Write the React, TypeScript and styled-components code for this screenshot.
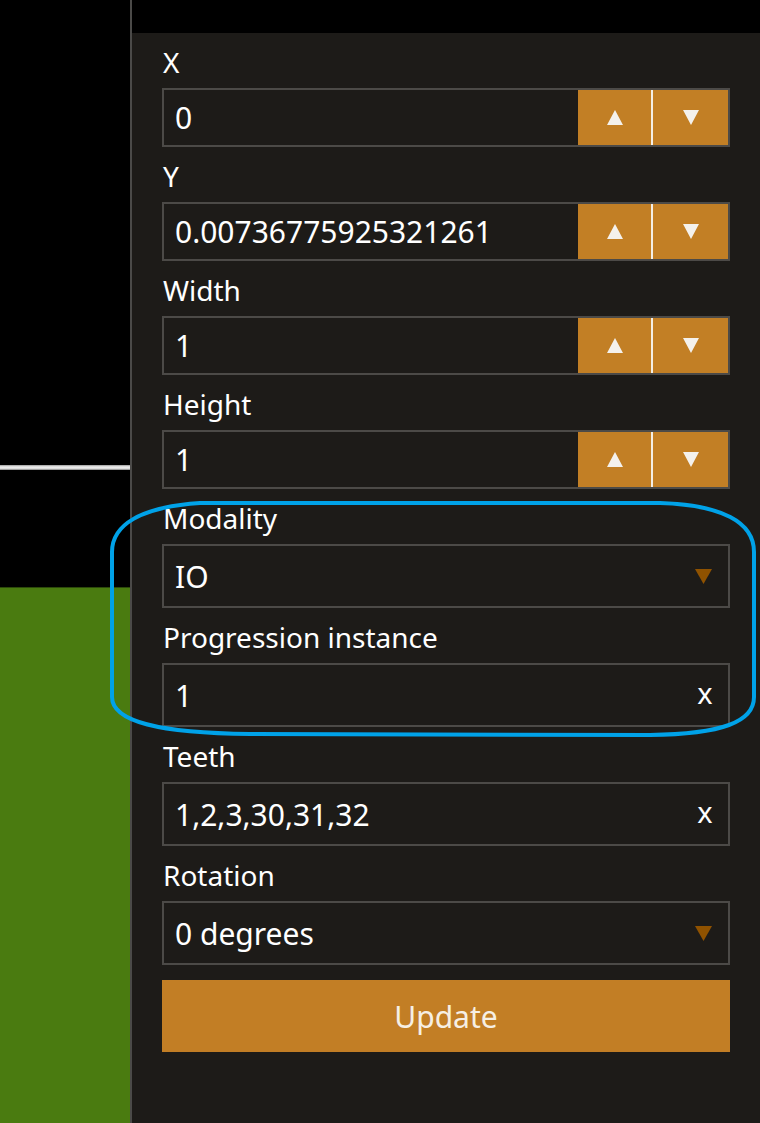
import styled, { createGlobalStyle } from "styled-components";

const GlobalStyle = createGlobalStyle`
    html, body {
        margin: 0;
        padding: 0;
        background: #1d1b18;
    }
    * {
        box-sizing: border-box;
    }
`;

const Page = styled.div`
    position: relative;
    display: flex;
    width: 760px;
    height: 1123px;
    overflow: hidden;
    font-family: "Noto Sans", "Open Sans", sans-serif;
    color: #ffffff;
`;

const Viewport = styled.div`
    display: flex;
    flex-direction: column;
    flex-shrink: 0;
    width: 130px;
    background: #000;
`;

const Blank = styled.div<{ $h: number }>`
    height: ${(p) => p.$h}px;
    background: #000;
`;

const Horizon = styled.div`
    height: 5px;
    background: linear-gradient(#9a9a9a, #f2f2f2 40%, #d6d6d6 80%, #6a6a6a);
`;

const Ground = styled.div`
    flex: 1;
    background: #4a7b10;
    border-top: 1px solid #2c4a0a;
`;

const Divider = styled.div`
    flex-shrink: 0;
    width: 2px;
    background: #4b4a48;
`;

const Side = styled.div`
    flex: 1;
    min-width: 0;
    display: flex;
    flex-direction: column;
`;

const TopBar = styled.div`
    height: 33px;
    background: #000;
`;

const Panel = styled.div`
    flex: 1;
    min-width: 0;
    background: #1d1b18;
    padding: 0 30px 0 30px;
`;

const Field = styled.div`
    margin-top: 12px;
`;

const Label = styled.div`
    font-size: 28px;
    line-height: 34px;
    margin-bottom: 9px;
    padding-left: 1px;
`;

const Box = styled.div<{ $tall?: boolean }>`
    display: flex;
    align-items: stretch;
    height: ${(p) => (p.$tall ? 64 : 59)}px;
    border: 2px solid #4c4a47;
`;

const Value = styled.input`
    flex: 1;
    width: 0;
    min-width: 0;
    background: transparent;
    border: none;
    outline: none;
    color: #ffffff;
    font-family: inherit;
    font-size: 30px;
    padding: 0 0 0 11px;
`;

const SpinBtn = styled.button<{ $down?: boolean }>`
    display: flex;
    flex-shrink: 0;
    align-items: center;
    justify-content: center;
    width: ${(p) => (p.$down ? 77 : 73)}px;
    padding: 0;
    border: none;
    border-left: ${(p) => (p.$down ? "2px solid #f4efe6" : "none")};
    background: #c27f25;
    cursor: pointer;
`;

const Trailing = styled.div<{ $w: number }>`
    display: flex;
    flex-shrink: 0;
    align-items: center;
    justify-content: center;
    width: ${(p) => p.$w}px;
`;

const ClearX = styled.span`
    font-size: 29px;
    line-height: 1;
    color: #ffffff;
    margin-top: -5px;
`;

const UpdateButton = styled.button`
    display: block;
    width: 100%;
    height: 72px;
    margin-top: 15px;
    border: none;
    background: #c27e25;
    color: #f6efe4;
    font-family: inherit;
    font-size: 30px;
    cursor: pointer;
`;

const Annotation = styled.svg`
    position: absolute;
    left: 0;
    top: 0;
    pointer-events: none;
`;

function Triangle({ up, color, w = 16, h = 15 }: { up?: boolean; color: string; w?: number; h?: number }) {
    return (
        <svg width={w} height={h} viewBox={`0 0 ${w} ${h}`}>
            {up ? (
                <polygon points={`${w / 2},0 ${w},${h} 0,${h}`} fill={color} />
            ) : (
                <polygon points={`0,0 ${w},0 ${w / 2},${h}`} fill={color} />
            )}
        </svg>
    );
}

function NumberField({ label, value }: { label: string; value: string }) {
    return (
        <Field>
            <Label>{label}</Label>
            <Box>
                <Value readOnly value={value} />
                <SpinBtn>
                    <Triangle up color="#f4f1ec" />
                </SpinBtn>
                <SpinBtn $down>
                    <Triangle color="#f4f1ec" />
                </SpinBtn>
            </Box>
        </Field>
    );
}

function SelectField({ label, value }: { label: string; value: string }) {
    return (
        <Field>
            <Label>{label}</Label>
            <Box $tall>
                <Value readOnly value={value} />
                <Trailing $w={49}>
                    <Triangle color="#8f5200" w={17} h={15} />
                </Trailing>
            </Box>
        </Field>
    );
}

function TextField({ label, value }: { label: string; value: string }) {
    return (
        <Field>
            <Label>{label}</Label>
            <Box $tall>
                <Value readOnly value={value} />
                <Trailing $w={46}>
                    <ClearX>x</ClearX>
                </Trailing>
            </Box>
        </Field>
    );
}

function App() {
    return (
        <>
            <GlobalStyle />
            <Page>
                <Viewport>
                    <Blank $h={465} />
                    <Horizon />
                    <Blank $h={117} />
                    <Ground />
                </Viewport>
                <Divider />
                <Side>
                    <TopBar />
                    <Panel>
                        <NumberField label="X" value="0" />
                        <NumberField label="Y" value="0.00736775925321261" />
                        <NumberField label="Width" value="1" />
                        <NumberField label="Height" value="1" />
                        <SelectField label="Modality" value="IO" />
                        <TextField label="Progression instance" value="1" />
                        <TextField label="Teeth" value="1,2,3,30,31,32" />
                        <SelectField label="Rotation" value="0 degrees" />
                        <UpdateButton>Update</UpdateButton>
                    </Panel>
                </Side>
                <Annotation width={760} height={1123}>
                    <path
                        d="M 200 503 C 140 507, 112 525, 112 552 L 112 697 C 112 722, 160 733, 250 734 L 650 735 C 722 734, 754 722, 754 697 L 754 552 C 754 522, 722 505, 660 503 Z"
                        fill="none"
                        stroke="#00a2e8"
                        strokeWidth={4}
                    />
                </Annotation>
            </Page>
        </>
    );
}

export default App;
